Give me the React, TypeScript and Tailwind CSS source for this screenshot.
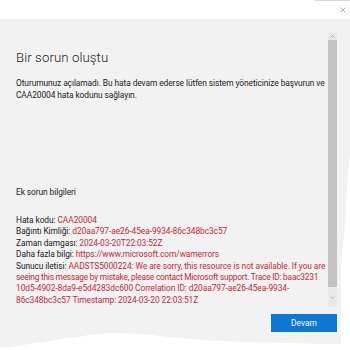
import React from 'react';

const font = { fontFamily: 'Roboto, "Noto Sans", sans-serif' };

const infoLines: [string, string][] = [
  ['Hata kodu: ', 'CAA20004'],
  ['Bağıntı Kimliği: ', 'd20aa797-ae26-45ea-9934-86c348bc3c57'],
  ['Zaman damgası: ', '2024-03-20T22:03:52Z'],
  ['Daha fazla bilgi: ', 'https://www.microsoft.com/wamerrors'],
  ['Sunucu iletisi: ', 'AADSTS5000224: We are sorry, this resource is not available. If you are'],
  ['', 'seeing this message by mistake, please contact Microsoft support. Trace ID: baac3231'],
  ['', '10d5-4902-8da9-e5d4283dc600 Correlation ID: d20aa797-ae26-45ea-9934-'],
  ['', '86c348bc3c57 Timestamp: 2024-03-20 22:03:51Z'],
];

const App: React.FC = () => {
  return (
    <div className="relative w-[350px] h-[350px] overflow-hidden bg-white flex flex-col text-[#1b1b1b]" style={font}>
      {/* Title bar */}
      <div className="h-[19px] shrink-0 flex justify-end items-start">
        <div className="relative w-[35px] h-[19px]">
          <div className="h-[1px] bg-[#d9d9d9]" />
          <svg className="absolute left-[25px] top-[7px]" width="6" height="6" viewBox="0 0 6 6">
            <path d="M0.5 0.5 L5.5 5.5 M5.5 0.5 L0.5 5.5" stroke="#a0a0a0" strokeWidth="0.8" />
          </svg>
        </div>
      </div>

      {/* Dialog body */}
      <div className="flex-1 bg-[#f2f2f2] flex flex-col">
        <div className="flex flex-1">
          <div className="flex-1 pl-[16px] pt-[30px] text-[8.4px] tracking-[-0.08px]">
            <h1 className="text-[13.2px] leading-[17px] font-light tracking-[0.1px]">Bir sorun oluştu</h1>
            <div className="mt-[11px] leading-[12px]">
              <div className="whitespace-nowrap">Oturumunuz açılamadı. Bu hata devam ederse lütfen sistem yöneticinize başvurun ve</div>
              <div className="whitespace-nowrap">CAA20004 hata kodunu sağlayın.</div>
            </div>
            <div className="mt-[85px] leading-[12px]">Ek sorun bilgileri</div>
            <div className="mt-[17px] leading-[11.4px]">
              {infoLines.map(([label, value], i) => (
                <div key={i} className={i === 5 ? 'whitespace-nowrap tracking-[-0.24px]' : 'whitespace-nowrap'}>
                  {label}
                  <span className="text-[#c42b3c]">{value}</span>
                </div>
              ))}
            </div>
          </div>

          {/* Scrollbar */}
          <div className="w-[9px] mr-[13px] mt-[14px] flex flex-col bg-[#e9e9e9]">
            <div className="h-[7px] flex items-center justify-center">
              <svg width="5" height="3" viewBox="0 0 5 3">
                <path d="M0.5 2.5 L2.5 0.5 L4.5 2.5" stroke="#9a9a9a" strokeWidth="0.7" fill="none" />
              </svg>
            </div>
            <div className="h-[247px] bg-[#c3c3c3]" />
            <div className="flex-1 flex items-center justify-center">
              <svg width="5" height="3" viewBox="0 0 5 3">
                <path d="M0.5 0.5 L2.5 2.5 L4.5 0.5" stroke="#9a9a9a" strokeWidth="0.7" fill="none" />
              </svg>
            </div>
          </div>
        </div>

        {/* Footer */}
        <div className="h-[43px] shrink-0 flex justify-end items-start pt-[7px] pr-[13px]">
          <button className="w-[66px] h-[18px] bg-[#0a78d4] text-white text-[8.4px] leading-[18px]">Devam</button>
        </div>
      </div>

      {/* Torn edge */}
      <svg className="absolute inset-0 pointer-events-none" width="350" height="350" viewBox="0 0 350 350">
        <path
          d="M0 348 C20 346 40 342 70 338 C90 335 100 333 112 333 C130 333 145 334 160 336 C185 339 210 341 250 342 C290 343 320 344 341 344 L341 262 C343 250 345 230 346 205 C347 185 349 165 350 150 L350 350 L0 350 Z"
          fill="#ffffff"
        />
      </svg>
    </div>
  );
};

export default App;
